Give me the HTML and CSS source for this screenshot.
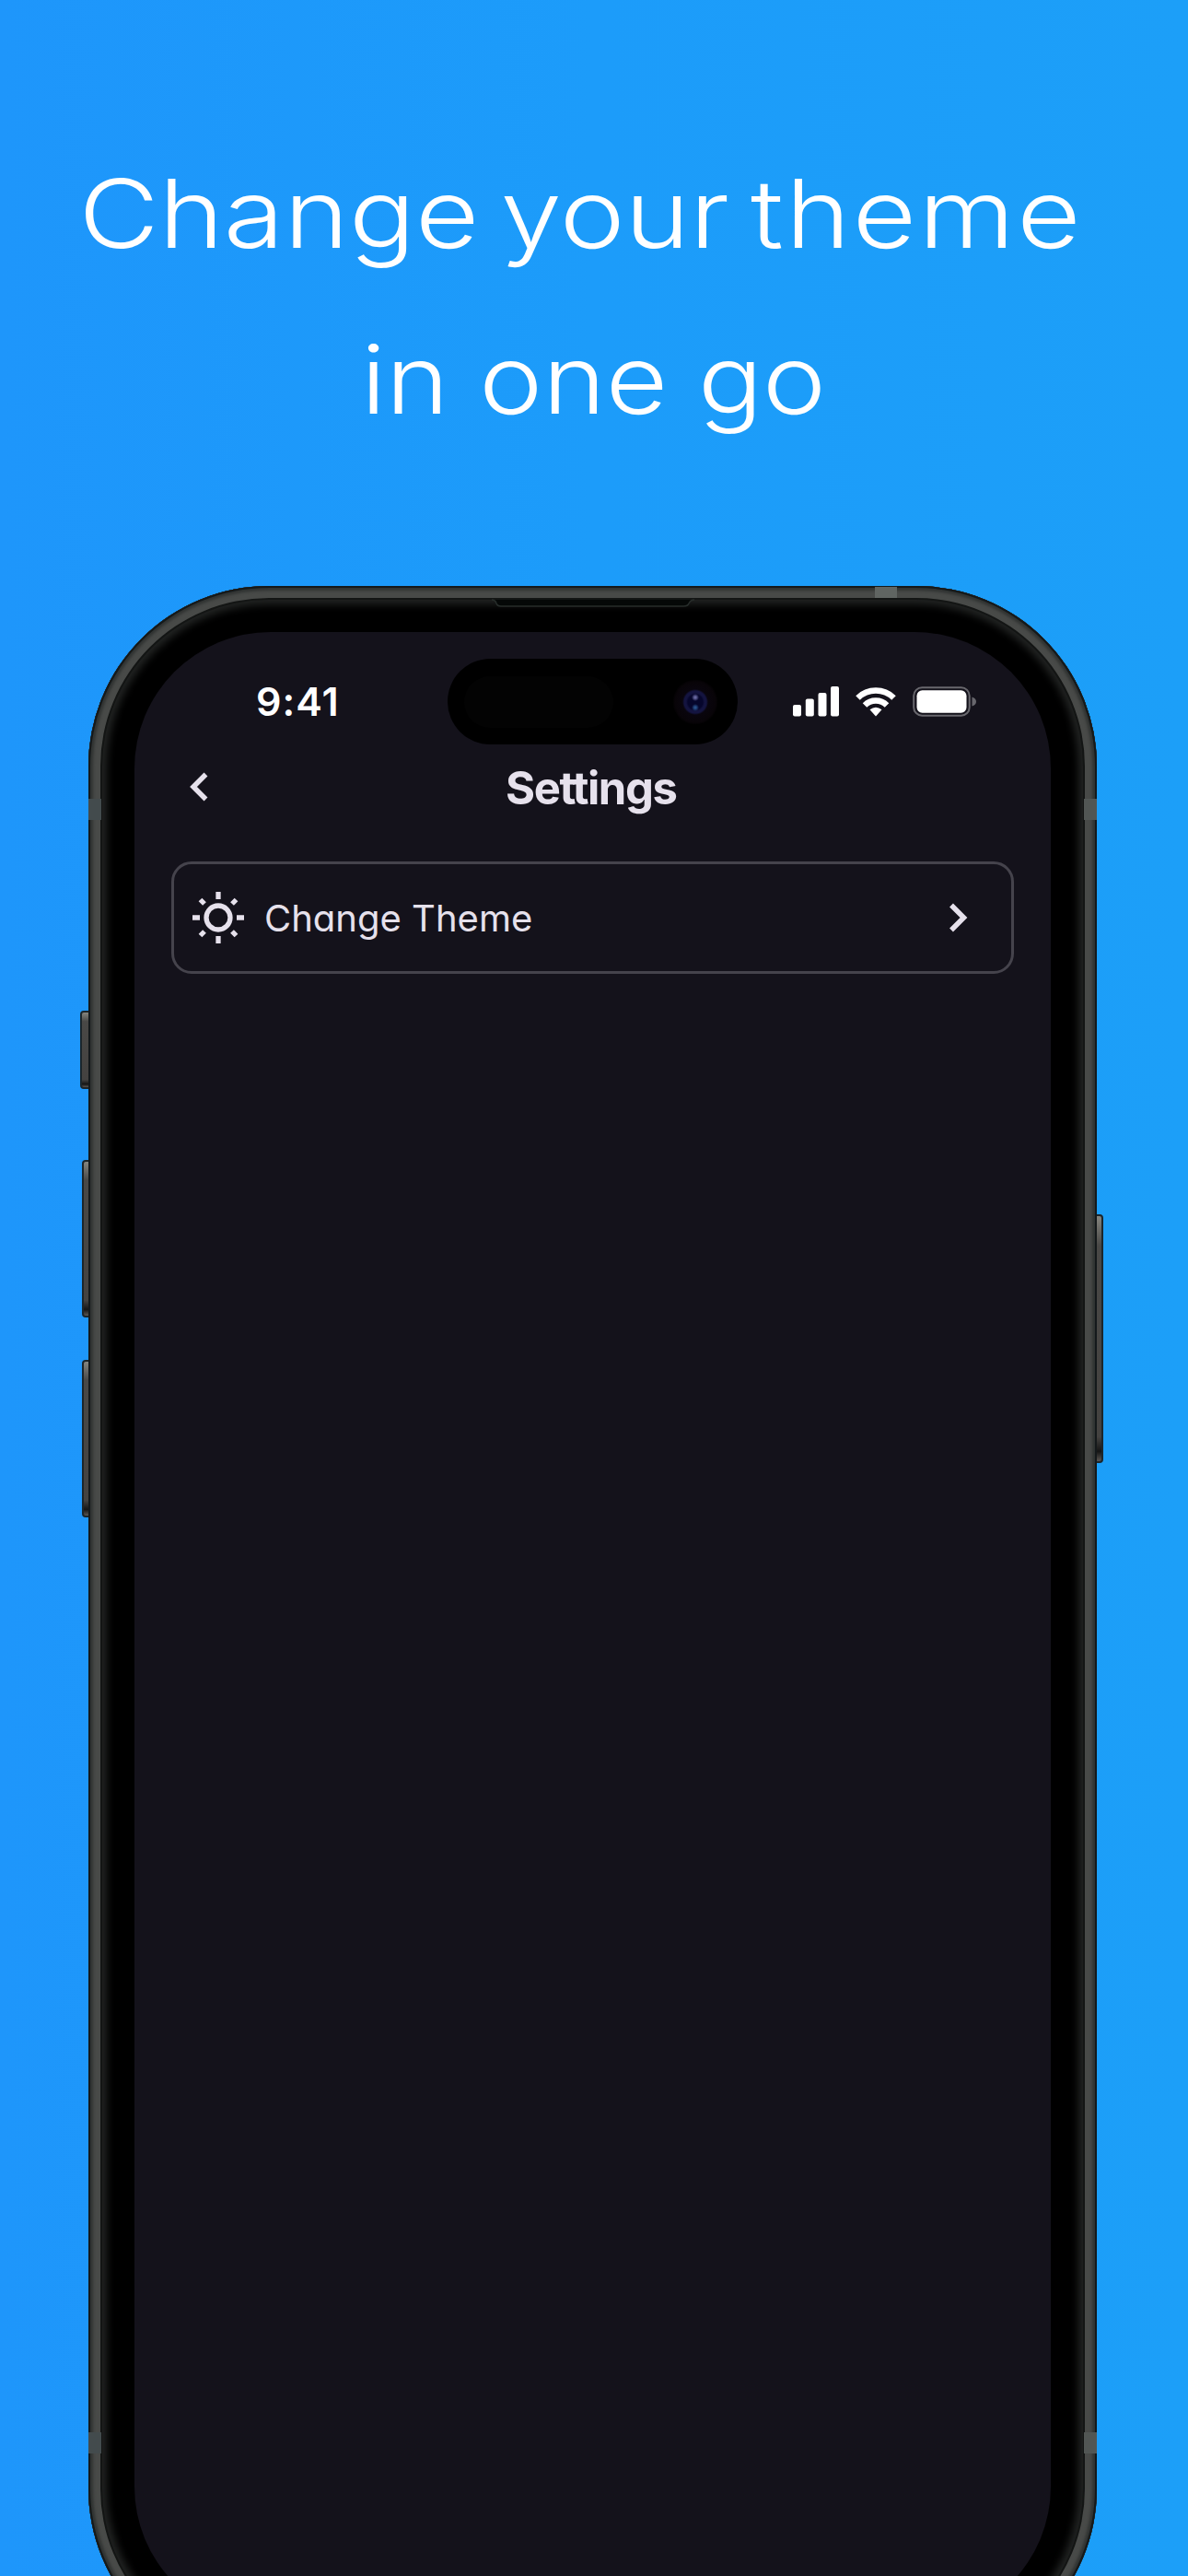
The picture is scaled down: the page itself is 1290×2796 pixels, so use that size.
FILE: index.html
```html
<!DOCTYPE html>
<html lang="en">
<head>
<meta charset="utf-8">
<title>Change your theme</title>
<link rel="stylesheet" href="styles.css">
</head>
<body>
<main class="poster">
  <h1 class="headline">
    <span class="line line-one">Change your <span class="wide">theme</span></span>
    <span class="line line-two">in one go</span>
  </h1>
  <section class="phone">
    <i class="button action"></i>
    <i class="button volume-up"></i>
    <i class="button volume-down"></i>
    <i class="button power"></i>
    <div class="frame">
      <i class="band band-top"></i>
      <i class="band band-left"></i>
      <i class="band band-right"></i>
      <i class="band band-left band-low"></i>
      <i class="band band-right band-low"></i>
      <svg class="earpiece" width="220" height="11" viewBox="0 0 220 11"><path d="M0 1Q4 1 5 5Q6 8 10 8H208Q213 8 214 5Q216 1 220 1" fill="#050807" stroke="#272d2a" stroke-width="1.5"/></svg>
      <div class="screen">
        <header class="status">
          <span class="time">9:41</span>
          <div class="island"><i class="sensor"></i><i class="camera"></i></div>
          <div class="indicators">
            <svg class="signal" width="50" height="33" viewBox="0 0 50 33" fill="#fff"><rect x="0" y="20" width="9" height="12.500" rx="2"/><rect x="13.800" y="13.500" width="9" height="19" rx="2"/><rect x="27.500" y="7" width="9" height="25.500" rx="2"/><rect x="41" y="0" width="9" height="32.500" rx="2"/></svg>
            <svg class="wifi" width="44" height="33" viewBox="0 0 44 33" fill="none" stroke="#fff" stroke-width="6.500"><path d="M2.500 12.500A28 28 0 0 1 41.500 12.500"/><path d="M10 20.500A17.200 17.200 0 0 1 34 20.500"/><path d="M15.500 25.300Q22 20 28.500 25.300L22 32.500Z" fill="#fff" stroke="none"/></svg>
            <svg class="battery" width="70" height="33" viewBox="0 0 70 33"><rect x="1.200" y="1.200" width="60.500" height="30.500" rx="9" fill="none" stroke="#68676d" stroke-width="2"/><rect x="4.500" y="4.300" width="54" height="24.400" rx="6" fill="#fff"/><path d="M64.500 11.500Q69 13 69 16.500T64.500 21.500Z" fill="#68676d"/></svg>
          </div>
        </header>
        <nav class="titlebar">
          <svg class="back" width="22" height="34" viewBox="0 0 22 34" fill="none" stroke="#e6e1ec" stroke-width="5.500"><path d="M17.500 3.500L4 17L17.500 30.500"/></svg>
          <h2 class="title">Se<span class="pair">t</span>tings</h2>
        </nav>
        <div class="row">
          <svg class="sun" width="58" height="58" viewBox="0 0 58 58" fill="none" stroke="#e6e1ec" stroke-width="5.300"><circle cx="29" cy="29" r="13"/><path d="M29 1V9M29 49V57M1 29H9M49 29H57M9.500 9.500L14 14M44 14L48.500 9.500M9.500 48.500L14 44M44 44L48.500 48.500"/></svg>
          <span class="label">Change Theme</span>
          <svg class="next" width="22" height="34" viewBox="0 0 22 34" fill="none" stroke="#e6e1ec" stroke-width="5.500"><path d="M3 3.500L16.500 17L3 30.500"/></svg>
        </div>
      </div>
    </div>
  </section>
</main>
</body>
</html>
```
FILE: styles.css
```css
* { box-sizing: border-box; }
html, body { margin: 0; }
body { font-family: Inter, "Liberation Sans", sans-serif; }
svg { display: block; flex: none; }

.poster {
  width: 1290px;
  height: 2796px;
  overflow: hidden;
  padding-top: 142px;
  background: linear-gradient(90deg, #1e96fb, #1c9cfa 50%, #1c9ff8);
}
.headline {
  display: flex;
  flex-direction: column;
  align-items: center;
  height: 494px;
  margin: 0;
  color: #fff;
  font-size: 103px;
  font-weight: 360;
  line-height: 180px;
}
.line { white-space: nowrap; }
.line-one { margin-right: 28px; word-spacing: -9px; transform: scaleX(1.161); }
.line-two { transform: scaleX(1.13); }
.wide { letter-spacing: 2px; }

.phone { position: relative; width: 1095px; height: 2261px; margin-left: 96px; }
.frame {
  position: relative;
  height: 100%;
  padding: 50px;
  border-radius: 196px;
  background: #000;
  box-shadow:
    inset 0 0 0 2px #14191b,
    inset 0 0 3px 5px #303332,
    inset 0 0 0 13px #484a48,
    inset 0 0 0 15px #131514,
    inset 0 0 9px 20px #222423;
}
.button {
  position: absolute;
  border: 2px solid #1c262b;
  border-radius: 4px 0 0 4px;
  background: linear-gradient(#85857f, #494846 12%, #444240 90%, #151515 96%, #5b5652);
}
.action { left: -9px; top: 461px; width: 12px; height: 85px; }
.volume-up { left: -7px; top: 623px; width: 10px; height: 171px; }
.volume-down { left: -7px; top: 840px; width: 10px; height: 171px; }
.power { right: -7px; top: 682px; width: 10px; height: 270px; border-radius: 0 4px 4px 0; }
.band { position: absolute; width: 14px; height: 23px; background: #515654; }
.band-top { left: 854px; top: 1px; width: 24px; height: 12px; background: #606562; }
.band-left { left: 0; top: 231px; background: #434b4d; }
.band-right { right: 0; top: 231px; }
.band-low { top: 2004px; }
.earpiece { position: absolute; left: 438px; top: 14px; }

.screen {
  height: 100%;
  padding-top: 29px;
  border-radius: 148px;
  background: #14121b;
  color: #e6e1ec;
}
.status {
  display: grid;
  grid-template-columns: 340px 315px 1fr;
  align-items: center;
  height: 93px;
}
.time {
  padding: 0 0 2px 132px;
  color: #fff;
  font-size: 43px;
  font-weight: 600;
  line-height: 50px;
  letter-spacing: 1px;
}
.island {
  display: flex;
  align-items: center;
  justify-content: space-between;
  height: 93px;
  padding: 0 21px 0 18px;
  border-radius: 47px;
  background: #000;
}
.sensor { width: 162px; height: 56px; border-radius: 28px; background: #030303; }
.camera {
  width: 50px;
  height: 50px;
  border-radius: 50%;
  background:
    radial-gradient(circle at 25px 20px, #66669f 0 1px, transparent 4px),
    radial-gradient(circle at 25px 31px, #28508a 0 1px, transparent 4px),
    radial-gradient(circle, #06062c 0 8px, #141440 10px 12px, #09050d 14px, #080408 22px, #000 25px);
}
.indicators { display: flex; gap: 18px; padding-left: 60px; }

.titlebar {
  display: grid;
  grid-template-columns: 60px 1fr 60px;
  align-items: center;
  height: 92px;
  padding: 0 0 0 60px;
}
.title {
  margin: 0;
  padding: 3px 0 0 283px;
  font-size: 49px;
  font-weight: 650;
  line-height: 60px;
  letter-spacing: -1.4px;
}
.pair { letter-spacing: -4px; }

.row {
  display: flex;
  align-items: center;
  width: 915px;
  height: 122px;
  margin: 35px 0 0 40px;
  padding: 0 46px 0 19px;
  border: 3px solid #45434c;
  border-radius: 22px;
}
.label {
  flex: 1;
  padding: 2px 0 0 21px;
  font-size: 40px;
  font-weight: 400;
  line-height: 50px;
  letter-spacing: 0;
  font-feature-settings: "cv11";
}
```
